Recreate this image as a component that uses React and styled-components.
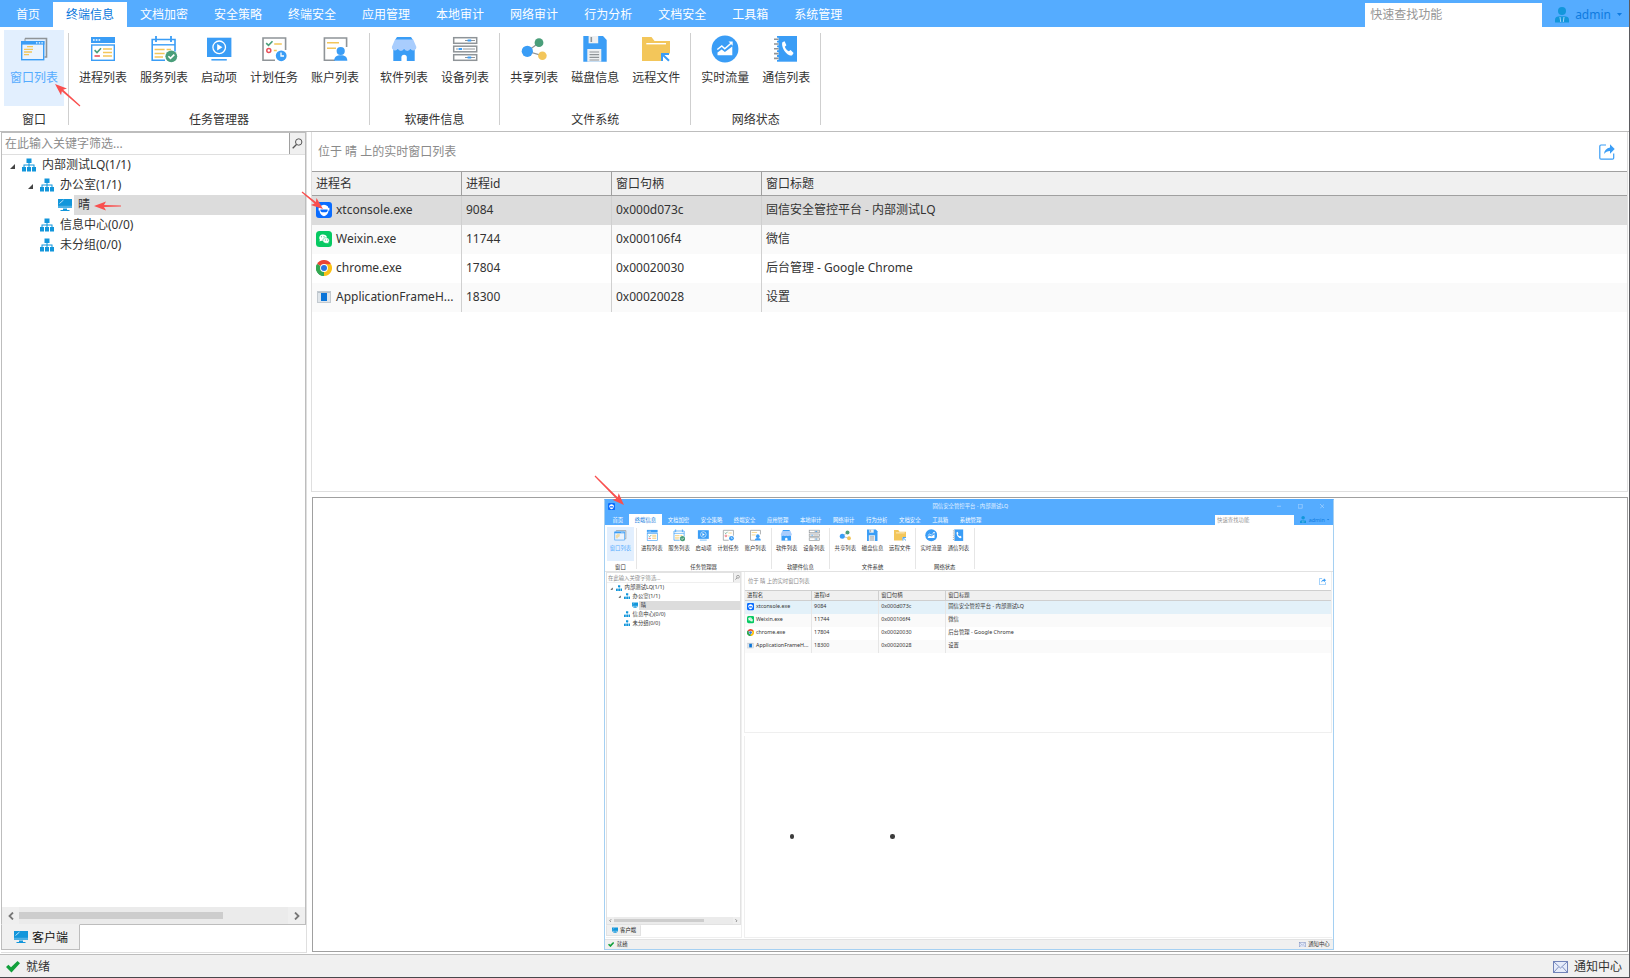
import React from "react";
import styled, { createGlobalStyle, css } from "styled-components";

const C = {
  bar: "#55acff",
  blue: "#3a9df6",
  gray: "#8f9498",
  yellow: "#f3c65a",
  green: "#4a9e7a",
  red: "#e9505a",
  tree: "#1296db",
  mark: "#f9504f",
};

const GlobalStyle = createGlobalStyle`
  * { box-sizing: border-box; }
  body { margin: 0; background: #fff; }
  body, button, input {
    font-family: "Noto Sans", "Noto Sans CJK SC", sans-serif;
    font-size: 12px;
    color: #333;
  }
  button {
    border: 0;
    padding: 0;
    background: none;
    cursor: pointer;
  }
`;

/* ---------- window frame ---------- */

const Window = styled.div`
  --line: ${(p) => (p.$preview ? "#e2e2e2" : "#bdbdbd")};
  --head-line: ${(p) => (p.$preview ? "#cfcfcf" : "#a0a0a0")};
  --cell-line: ${(p) => (p.$preview ? "#e6e6e6" : "#d0d0d0")};
  --soft-line: ${(p) => (p.$preview ? "#efefef" : "#dfdfdf")};
  --group-line: ${(p) => (p.$preview ? "#e6e6e6" : "#cfcfcf")};
  --selected: ${(p) => (p.$preview ? "#e3f1f9" : "#dcdcdc")};
  display: flex;
  flex-direction: column;
  background: #fff;
  line-height: 16px;
  ${(p) =>
    p.$preview
      ? css`
          height: 100%;
          border: 1px solid #a5d0f2;
          border-top-color: ${C.bar};
        `
      : css`
          min-height: 100vh;
          border-right: 1px solid #5a5a5e;
          border-bottom: 1px solid #48484c;
        `}
`;

const TitleBar = styled.div`
  display: grid;
  grid-template-columns: 1fr auto 1fr;
  align-items: center;
  height: 30px;
  padding-left: 6px;
  background: ${C.bar};
  color: #e6f3ff;
`;

const WindowButtons = styled.div`
  display: flex;
  justify-content: flex-end;
  button {
    width: 48px;
    height: 30px;
  }
`;

const MenuBar = styled.header`
  display: flex;
  align-items: flex-end;
  height: 27px;
  flex: none;
  padding-left: 3px;
  background: ${C.bar};
`;

const MenuTabs = styled.nav`
  display: flex;
  flex: 1;
`;

const MenuTab = styled.button`
  height: 25px;
  padding: 1px 13px 0;
  line-height: 24px;
  white-space: nowrap;
  color: ${(p) => (p.$active ? "#0a78dc" : "#fff")};
  background: ${(p) => (p.$active ? "#fff" : "transparent")};
`;

const QuickSearch = styled.input`
  width: 177px;
  height: 24px;
  padding: 0 5px 2px;
  border: 0;
  border-radius: 0;
  outline: 0;
  background: #fff;
  &::placeholder { color: #969696; opacity: 1; }
`;

const UserButton = styled.button`
  display: flex;
  align-items: center;
  height: 24px;
  margin-left: 13px;
  padding: 0 7px 1px 0;
  gap: 6px;
  color: #0f7be0;
`;

/* ---------- ribbon ---------- */

const Ribbon = styled.div`
  display: flex;
  flex: none;
  height: 105px;
  border-bottom: 1px solid var(--line);
`;

const RibbonGroup = styled.section`
  display: flex;
  flex-direction: column;
  padding: 3px 4px 0;
`;

const RibbonItems = styled.div`
  display: flex;
  gap: 1px;
`;

const GroupName = styled.div`
  height: 25px;
  line-height: 27px;
  text-align: center;
`;

const Separator = styled.div`
  margin: 6px 0;
  border-left: 1px solid var(--group-line);
`;

const RibbonButton = styled.button`
  position: relative;
  display: flex;
  flex-direction: column;
  align-items: center;
  gap: 7px;
  height: 76px;
  padding: 5px 6px 0;
  line-height: 16px;
  white-space: nowrap;
  color: ${(p) => (p.$active ? C.bar : "#333")};
  background: ${(p) => (p.$active ? "#e2effe" : "transparent")};
`;

/* ---------- work area ---------- */

const Work = styled.main`
  display: flex;
  flex: 1;
  gap: 4px;
  min-height: 0;
  padding: 0 1px 1px;
`;

const Sidebar = styled.aside`
  display: flex;
  flex-direction: column;
  flex: none;
  width: 306px;
  border-right: 1px solid var(--soft-line);
  border-bottom: 1px solid var(--soft-line);
`;

const TreePanel = styled.div`
  display: flex;
  flex-direction: column;
  flex: 1;
  border: 1px solid var(--line);
`;

const FilterRow = styled.div`
  display: flex;
  height: 22px;
  border-bottom: 1px solid var(--soft-line);
`;

const FilterInput = styled.input`
  flex: 1;
  min-width: 0;
  padding: 0 3px;
  border: 0;
  outline: 0;
  background: #fff;
  &::placeholder { color: #8c8c8c; opacity: 1; }
`;

const FilterButton = styled.button`
  display: flex;
  align-items: center;
  justify-content: center;
  width: 16px;
  border-left: 1px solid var(--head-line);
  background: #f0f0f0;
`;

const Tree = styled.ul`
  flex: 1;
  margin: 0;
  padding: 0;
  list-style: none;
`;

const TreeRow = styled.li`
  display: flex;
  align-items: center;
  height: 20px;
  padding-left: ${(p) => 5 + p.$level * 18}px;
`;

const Toggle = styled.span`
  display: flex;
  width: 15px;
  padding: 2px 0 0 2px;
`;

const NodeText = styled.span`
  position: relative;
  flex: 1;
  height: 20px;
  margin-left: 2px;
  padding-left: 4px;
  line-height: 20px;
  background: ${(p) => (p.$selected ? "#dcdcdc" : "transparent")};
`;

const ScrollBar = styled.div`
  display: flex;
  align-items: center;
  height: 17px;
  background: #ebebeb;
`;

const ScrollArrow = styled.button`
  display: flex;
  align-items: center;
  justify-content: center;
  width: 17px;
  height: 17px;
  background: #efefef;
`;

const ScrollTrack = styled.div`
  flex: 1;
`;

const ScrollThumb = styled.div`
  width: 76%;
  height: 7px;
  background: #cdcdcd;
`;

const SideTabs = styled.div`
  height: 27px;
`;

const SideTab = styled.button`
  position: relative;
  display: flex;
  align-items: center;
  gap: 4px;
  width: 79px;
  height: 26px;
  margin-top: -1px;
  padding: 0 0 1px 12px;
  border: 1px solid var(--line);
  border-top-color: #f0f0f0;
  background: #f0f0f0;
  color: #111;
`;

const Content = styled.div`
  display: flex;
  flex-direction: column;
  flex: 1;
  min-width: 0;
  gap: 5px;
`;

const ListPane = styled.section`
  flex: none;
  height: 360px;
  border: 1px solid var(--soft-line);
  border-top: 0;
`;

const ListHead = styled.div`
  display: flex;
  align-items: center;
  justify-content: space-between;
  height: 39px;
  padding: 1px 12px 0 6px;
  color: #8a8a8a;
  button { height: 16px; }
`;

const Table = styled.table`
  width: 100%;
  table-layout: fixed;
  border-collapse: separate;
  border-spacing: 0;
  text-align: left;
`;

const Col = styled.col`
  width: 150px;
`;

const HeadCell = styled.th`
  height: 25px;
  padding: 0 4px;
  font-weight: 400;
  background: #f0f0f0;
  border-top: 1px solid var(--head-line);
  border-bottom: 1px solid var(--head-line);
  &:not(:last-child) { border-right: 1px solid var(--head-line); }
`;

const Row = styled.tr`
  background: ${(p) => (p.$selected ? "var(--selected)" : p.$odd ? "#fafafa" : "#fff")};
`;

const Cell = styled.td`
  position: relative;
  height: 29px;
  padding: 0 4px 2px;
  white-space: nowrap;
  &:not(:last-child) { border-right: 1px solid var(--cell-line); }
`;

const Process = styled.span`
  display: flex;
  align-items: center;
  gap: 4px;
`;

const ScreenPane = styled.section`
  display: flex;
  align-items: center;
  justify-content: center;
  flex: 1;
  margin: 0 0 1px 1px;
  padding-right: 2px;
  border: 1px solid var(--head-line);
`;

const EmptyPane = styled.section`
  position: relative;
  flex: 1;
  border-left: 1px solid var(--soft-line);
  border-bottom: 1px solid var(--soft-line);
`;

const Dot = styled.span`
  position: absolute;
  left: ${(p) => p.$x}px;
  top: 221px;
  width: 10px;
  height: 10px;
  border-radius: 50%;
  background: #3c3c3c;
`;

const ScreenFrame = styled.div`
  position: relative;
`;

/* The remote desktop keeps its own resolution and is shown reduced. */
const RemoteScreen = styled.div`
  width: 1632px;
  height: 1009px;
  zoom: 0.447;
`;

const StatusBar = styled.footer`
  display: flex;
  align-items: center;
  justify-content: space-between;
  flex: none;
  height: 23px;
  padding: 2px 7px 0 6px;
  border-top: 1px solid var(--line);
  background: #f0f0f0;
`;

const StatusItem = styled.span`
  display: flex;
  align-items: center;
  gap: 6px;
`;

const ArrowSvg = styled.svg`
  position: absolute;
  left: ${(p) => p.$left}px;
  top: ${(p) => p.$top}px;
  z-index: 2;
  overflow: visible;
  pointer-events: none;
`;

/* Red pointer: the tip sits at (left, top), the tail is dx, dy away. */
function Arrow({ left, top, dx, dy }) {
  const len = Math.hypot(dx, dy);
  const angle = (Math.atan2(dy, dx) * 180) / Math.PI;
  return (
    <ArrowSvg $left={left} $top={top} width="1" height="1" aria-hidden="true">
      <g transform={`rotate(${angle})`} fill={C.mark}>
        <path d={`M0 0 L12 -4.5 L10 -1 L${len} -0.6 L${len} 0.6 L10 1 L12 4.5 Z`} />
      </g>
    </ArrowSvg>
  );
}

/* ---------- icons ---------- */

const Glyph = ({ children }) => (
  <svg width="28" height="28" viewBox="0 0 28 28" fill="none" aria-hidden="true">
    {children}
  </svg>
);

const icons = {
  windows: (
    <Glyph>
      <path d="M5 3.5H26.5V22H24.5" stroke={C.gray} strokeWidth="1.6" />
      <path d="M5 3.5V6" stroke={C.gray} strokeWidth="1" />
      <rect x="1.7" y="6.7" width="22" height="18" stroke={C.blue} strokeWidth="1.4" fill="#eaf3fe" />
      <path d="M1 6h23.4v3.6H1z" fill={C.blue} />
      <path d="M16 7.8h1.4M18.8 7.8h1.4M21.4 7.8h1.4" stroke="#fff" strokeWidth="1.2" />
      <path d="M7 11.7h6M4 14.3h9M4 17h8M4 19.6h5" stroke={C.yellow} strokeWidth="1.3" />
    </Glyph>
  ),
  process: (
    <Glyph>
      <path d="M2 2h24v6H2z" fill={C.blue} />
      <path d="M4 5h1.6M6.8 5h1.6M9.6 5h1.6" stroke="#fff" strokeWidth="1.4" />
      <rect x="2.7" y="10" width="22.6" height="15.3" stroke={C.blue} strokeWidth="1.4" />
      <path d="M5.6 15.2l2.4 2.3 4-4.2" stroke={C.green} strokeWidth="1.6" />
      <path d="M5.5 21h5.4" stroke={C.red} strokeWidth="1.6" />
      <path d="M14 14h9M14 17.5h9M14 21h9" stroke={C.yellow} strokeWidth="1.6" />
    </Glyph>
  ),
  service: (
    <Glyph>
      <path d="M15 25.2H2.2V4.5H25v12" stroke={C.blue} strokeWidth="1.6" />
      <path d="M2 9.8h23" stroke={C.blue} strokeWidth="1.4" />
      <path d="M6 1v6M21 1v6" stroke={C.blue} strokeWidth="1.8" />
      <path d="M4.6 14.5H21M4.6 18.5H15M4.6 22H13" stroke={C.yellow} strokeWidth="1.5" strokeDasharray="10 2" />
      <circle cx="21.3" cy="21.3" r="5.9" fill={C.green} />
      <path d="M18.4 21.3l2.1 2.1 3.8-3.8" stroke="#fff" strokeWidth="1.6" />
    </Glyph>
  ),
  startup: (
    <Glyph>
      <path d="M2 2.7h24.4V22H2z" fill={C.blue} />
      <circle cx="14.2" cy="12.3" r="6.3" stroke="#fff" strokeWidth="1.3" />
      <path d="M12.2 9v6.6l5.2-3.3z" fill="#fff" />
      <path d="M6.4 24.8h15.4" stroke={C.blue} strokeWidth="1.5" />
    </Glyph>
  ),
  schedule: (
    <Glyph>
      <path d="M15 25.2H3V3h22.6v12" stroke={C.gray} strokeWidth="1.6" />
      <path d="M6.2 8.2l2.3 2.2 4-4.2" stroke={C.green} strokeWidth="1.6" />
      <path d="M14.2 9h7.6M13.8 15.5h3" stroke={C.yellow} strokeWidth="1.5" />
      <circle cx="8.8" cy="15.4" r="2" stroke={C.red} strokeWidth="1.5" />
      <circle cx="21.2" cy="20.8" r="5.4" fill={C.blue} />
      <path d="M21 17.6v3.4h3" stroke="#fff" strokeWidth="1.3" />
    </Glyph>
  ),
  account: (
    <Glyph>
      <path d="M14 25.2H3.4V3h22.2v9" stroke={C.gray} strokeWidth="1.6" />
      <path d="M6 7.7h12M6 13.3h9" stroke={C.yellow} strokeWidth="1.5" />
      <circle cx="19.7" cy="16" r="4.1" fill={C.blue} />
      <path d="M13.2 25.8c0-4 2.4-5.6 6.5-5.6s6.6 1.6 6.6 5.6z" fill={C.blue} />
    </Glyph>
  ),
  software: (
    <Glyph>
      <path d="M3.3 14h21.4v12H3.3z" fill={C.blue} />
      <path d="M11.4 26v-3.6a2.7 2.7 0 0 1 5.4 0V26z" fill="#fff" />
      <path d="M7 2h14l2 3H5z" fill={C.blue} />
      <path d="M5 4.500h18.200L26.400 12a3.200 3.200 0 0 1-6 1.800 3.400 3.400 0 0 1-6.300 0 3.400 3.400 0 0 1-6.300 0A3.200 3.200 0 0 1 1.800 12z" fill="#a9cdfd" />
    </Glyph>
  ),
  device: (
    <Glyph>
      <g stroke={C.gray} strokeWidth="1.5">
        <rect x="2.7" y="2.7" width="23" height="5.6" />
        <rect x="2.7" y="11.2" width="23" height="5.6" />
        <rect x="2.7" y="19.7" width="23" height="5.6" />
        <path d="M14 5.5h10M5 14h2M12 14h12M14 22.5h10" strokeWidth="1" />
      </g>
      <path d="M16.6 5.5h3.6M7.5 14h3.6M16.6 22.5h3.6" stroke={C.blue} strokeWidth="1.8" />
    </Glyph>
  ),
  share: (
    <Glyph>
      <path d="M19 7.7L7.3 16.3l15 4.4" stroke={C.gray} strokeWidth="1.2" />
      <circle cx="7.3" cy="16.3" r="5.6" fill={C.blue} />
      <circle cx="19" cy="7.7" r="4.4" fill={C.green} />
      <circle cx="22.4" cy="20.7" r="4.3" fill={C.yellow} />
    </Glyph>
  ),
  disk: (
    <Glyph>
      <path d="M2.3 1H22l3.7 4v21.7H2.3z" fill={C.blue} />
      <path d="M7.6 1H17.2v7.3H7.6z" fill="#eef0f2" />
      <path d="M10.3 2v5" stroke={C.gray} strokeWidth="1.6" />
      <path d="M6.3 14h14v12.7h-14z" fill="#eef0f2" />
      <path d="M8.5 17h9.6M8.5 19.7h9.6M8.5 22.3h9.6M8.5 25h9.6" stroke={C.gray} strokeWidth="1.2" />
    </Glyph>
  ),
  folder: (
    <Glyph>
      <path d="M0 2h9.5l3 4H28v12.5H19V26H0z" fill={C.yellow} />
      <path d="M4.3 8.7H24" stroke="#fff" strokeWidth="1.4" />
      <path d="M20 26v-7h7M20.2 19.2l6.8 6.6" stroke={C.blue} strokeWidth="2" />
    </Glyph>
  ),
  traffic: (
    <Glyph>
      <circle cx="14" cy="14" r="13.4" fill={C.blue} />
      <path d="M6.3 14.5l4.5-3.5 3 2.8 6.8-6" stroke="#fff" strokeWidth="1.5" />
      <path d="M17.5 6.6h4.2v4.2z" fill="#fff" />
      <path d="M6.5 20.2v-2.6l4.2-3.2 3.2 2.5 7.4-5.4v8.7z" fill="#fff" />
    </Glyph>
  ),
  contacts: (
    <Glyph>
      <path d="M5 1h20v25.7H5z" fill={C.blue} />
      <path d="M2 4.2h4.5M2 9h4.5M2 13.8h4.5M2 18.6h4.5M2 23.4h4.5" stroke="#fff" strokeWidth="3" />
      <path d="M2 4.2h4.5M2 9h4.5M2 13.8h4.5M2 18.6h4.5M2 23.4h4.5" stroke={C.gray} strokeWidth="1.6" />
      <path d="M10.4 7.2l2.2-1 1.8 4-1.6 1.5c.8 2 2.2 3.6 4 4.6l1.8-1.2 3 3-1.4 2.2c-1 .8-3.6 0-6-2.4-3-3-4.9-8-3.800-10.700z" fill="#fff" />
    </Glyph>
  ),
};

const GroupIcon = () => (
  <svg width="14" height="14" viewBox="0 0 14 14" fill={C.tree} aria-hidden="true">
    <path d="M4.5 0.5h5v4.5h-5zM0 9h4v4.500H0zM5 9h4v4.500H5zM10 9h4v4.500h-4zM6.500 5h1v1.500h-1zM1.500 6.500h11v2.500h-1v-1.500h-4v1.500h-1v-1.500h-4v1.500h-1z" />
  </svg>
);

const MonitorIcon = () => (
  <svg width="14" height="14" viewBox="0 0 14 14" aria-hidden="true">
    <path d="M0 1h14v8.8H0zM5 10.5h4v1.5h2.5v1h-9v-1H5z" fill={C.tree} />
    <path d="M0 8.3h14" stroke="#7cc6ee" strokeWidth="0.7" />
    <path d="M1.5 5.5l4-3.500" stroke="#bfe3f7" strokeWidth="1" />
  </svg>
);

const UserIcon = () => (
  <svg width="14" height="16" viewBox="0 0 14 16" fill={C.tree} aria-hidden="true">
    <circle cx="7" cy="4" r="4" />
    <path d="M0 15.5v-3c0-2 2-3.2 5-3.2h4c3 0 5 1.2 5 3.2v3z" />
    <path d="M5 10l.7 5M9 10l-.7 5" stroke="#9fd3f8" strokeWidth="1" />
  </svg>
);

const ExportIcon = () => (
  <svg width="16" height="16" viewBox="0 0 16 16" fill="none" aria-hidden="true">
    <path d="M7 1H2Q.8 1 .8 2.2V14q0 1.2 1.2 1.2h11.5q1.2 0 1.2-1.2V9.5" stroke={C.blue} strokeWidth="1.2" />
    <path d="M11 .3L15.7 5 11 9.7V7C8.500 7 6.500 8 5 10c.3-3.500 2.500-6 6-6.500z" fill={C.blue} />
  </svg>
);

const SearchIcon = () => (
  <svg width="11" height="11" viewBox="0 0 11 11" fill="none" stroke="#555" aria-hidden="true">
    <circle cx="6.7" cy="4" r="3.2" />
    <path d="M4.5 6.5L.7 10.3" strokeWidth="1.3" />
  </svg>
);

const CheckIcon = () => (
  <svg width="14" height="12" viewBox="0 0 14 12" aria-hidden="true">
    <path d="M0 6l2.4-2.3L5 6.3 11.5 0 14 2.3 5.5 11.5z" fill="#12a03c" />
  </svg>
);

const MailIcon = () => (
  <svg width="15" height="12" viewBox="0 0 15 12" fill="none" stroke="#7183b8" aria-hidden="true">
    <rect x="0.5" y="0.5" width="14" height="11" fill="#e6ecfa" />
    <path d="M1 1l6.5 6L14 1M1 11l4.5-5M14 11L9.500 6" strokeWidth="0.9" />
  </svg>
);

const ConsoleIcon = () => (
  <svg width="16" height="16" viewBox="0 0 16 16" aria-hidden="true">
    <rect width="16" height="16" rx="3" fill="#0a6cff" />
    <path d="M4 4.600Q8 .8 12 4.600v1.200H4zM2.600 5.800h10.800v2.600h-.9c0 3-2 5-4.500 5.800-2.500-.8-4.500-2.800-4.500-5.800h-.9z" fill="#fff" />
    <path d="M4.400 7.400h7.200v1.400q-.3 1.400-1.600 1.400H6q-1.300 0-1.600-1.400z" fill="#0a6cff" />
  </svg>
);

const WeixinIcon = () => (
  <svg width="16" height="16" viewBox="0 0 16 16" aria-hidden="true">
    <rect width="16" height="16" rx="3.5" fill="#07c962" />
    <path d="M3.500 10.500l.3-2A3.900 3.300 0 1 1 6.500 10l-1.300-.3z" fill="#fff" />
    <path d="M12.700 12.600l-.1-1.300a3.300 2.800 0 1 0-2.300 1h1z" fill="#fff" stroke="#07c962" strokeWidth="0.5" />
    <g fill="#07a852">
      <circle cx="5.4" cy="5.8" r=".5" />
      <circle cx="8" cy="5.8" r=".5" />
      <circle cx="9.3" cy="9" r=".5" />
      <circle cx="11.4" cy="9" r=".5" />
    </g>
  </svg>
);

const ChromeIcon = () => (
  <svg width="16" height="16" viewBox="0 0 16 16" aria-hidden="true">
    <path d="M8 8L1.070 4A8 8 0 0 1 14.930 4z" fill="#ea4335" />
    <path d="M8 8L14.930 4A8 8 0 0 1 8 16z" fill="#fbc116" />
    <path d="M8 8L8 16A8 8 0 0 1 1.070 4z" fill="#34a853" />
    <path d="M8 4.200h6.800L15 4.200 11.500 9.800 8 16 9 11z" fill="#fbc116" />
    <path d="M1.070 4L4.600 10 8 11.500V16A8 8 0 0 1 1.070 4z" fill="#34a853" />
    <circle cx="8" cy="8" r="3.9" fill="#fff" />
    <circle cx="8" cy="8" r="3" fill="#2b74e4" />
  </svg>
);

const FrameHostIcon = () => (
  <svg width="16" height="16" viewBox="0 0 16 16" aria-hidden="true">
    <rect x="1.5" y="2.5" width="13" height="11" fill="#dfe5ea" stroke="#c3cad0" />
    <path d="M2 3h12v1H2z" fill="#b8c1c9" />
    <rect x="5" y="4" width="6" height="8" fill="#0a74d8" />
  </svg>
);

/* ---------- data ---------- */

const menu = ["首页", "终端信息", "文档加密", "安全策略", "终端安全", "应用管理", "本地审计", "网络审计", "行为分析", "文档安全", "工具箱", "系统管理"];

const ribbon = [
  { name: "窗口", items: [["窗口列表", "windows"]] },
  {
    name: "任务管理器",
    items: [["进程列表", "process"], ["服务列表", "service"], ["启动项", "startup"], ["计划任务", "schedule"], ["账户列表", "account"]],
  },
  { name: "软硬件信息", items: [["软件列表", "software"], ["设备列表", "device"]] },
  { name: "文件系统", items: [["共享列表", "share"], ["磁盘信息", "disk"], ["远程文件", "folder"]] },
  { name: "网络状态", items: [["实时流量", "traffic"], ["通信列表", "contacts"]] },
];

const nodes = [
  { text: "内部测试LQ(1/1)", level: 0, open: true },
  { text: "办公室(1/1)", level: 1, open: true },
  { text: "晴", level: 2, selected: true },
  { text: "信息中心(0/0)", level: 1 },
  { text: "未分组(0/0)", level: 1 },
];

const columns = ["进程名", "进程id", "窗口句柄", "窗口标题"];

const processes = [
  { icon: <ConsoleIcon />, name: "xtconsole.exe", id: "9084", handle: "0x000d073c", title: "固信安全管控平台 - 内部测试LQ" },
  { icon: <WeixinIcon />, name: "Weixin.exe", id: "11744", handle: "0x000106f4", title: "微信" },
  { icon: <ChromeIcon />, name: "chrome.exe", id: "17804", handle: "0x00020030", title: "后台管理 - Google Chrome" },
  { icon: <FrameHostIcon />, name: "ApplicationFrameH...", id: "18300", handle: "0x00020028", title: "设置" },
];

/* ---------- console ---------- */

function RemoteTitleBar() {
  return (
    <TitleBar>
      <ConsoleIcon />
      <span>固信安全管控平台 - 内部测试LQ</span>
      <WindowButtons>
        {[["最小化", "M0 5h10"], ["最大化", "M.5 .5h9v9h-9z"], ["关闭", "M0 0l10 10M10 0L0 10"]].map(([label, d]) => (
          <button key={label} aria-label={label}>
            <svg width="10" height="10" viewBox="0 0 10 10" fill="none" stroke="#d6ebff">
              <path d={d} />
            </svg>
          </button>
        ))}
      </WindowButtons>
    </TitleBar>
  );
}

function Console({ preview = false }) {
  return (
    <Window $preview={preview}>
      {preview && <RemoteTitleBar />}
      <MenuBar>
        <MenuTabs>
          {menu.map((m, i) => (
            <MenuTab key={m} $active={i === 1}>{m}</MenuTab>
          ))}
        </MenuTabs>
        <QuickSearch aria-label="快速查找功能" placeholder="快速查找功能" />
        <UserButton>
          <UserIcon />
          <span>admin</span>
          <svg width="5" height="3" viewBox="0 0 5 3" fill="#0f7be0" aria-hidden="true"><path d="M0 0h5L2.5 3z" /></svg>
        </UserButton>
      </MenuBar>

      <Ribbon>
        {ribbon.map((g, gi) => (
          <React.Fragment key={g.name}>
            <RibbonGroup>
              <RibbonItems>
                {g.items.map(([label, icon]) => (
                  <RibbonButton key={label} $active={gi === 0}>
                    {icons[icon]}
                    <span>{label}</span>
                    {gi === 0 && !preview && <Arrow left={51} top={54} dx={25} dy={22} />}
                  </RibbonButton>
                ))}
              </RibbonItems>
              <GroupName>{g.name}</GroupName>
            </RibbonGroup>
            <Separator />
          </React.Fragment>
        ))}
      </Ribbon>

      <Work>
        <Sidebar>
          <TreePanel>
            <FilterRow>
              <FilterInput aria-label="关键字筛选" placeholder="在此输入关键字筛选..." />
              <FilterButton aria-label="搜索"><SearchIcon /></FilterButton>
            </FilterRow>
            <Tree>
              {nodes.map((n) => (
                <TreeRow key={n.text} $level={n.level}>
                  <Toggle>
                    {n.open && (
                      <svg width="7" height="7" viewBox="0 0 7 7" fill="#444" aria-hidden="true"><path d="M6 1v5H1z" /></svg>
                    )}
                  </Toggle>
                  {n.selected ? <MonitorIcon /> : <GroupIcon />}
                  <NodeText $selected={n.selected}>
                    {n.text}
                    {n.selected && !preview && <Arrow left={20} top={11} dx={27} dy={0} />}
                  </NodeText>
                </TreeRow>
              ))}
            </Tree>
            <ScrollBar>
              <ScrollArrow aria-label="向左滚动">
                <svg width="6" height="8" viewBox="0 0 6 8" fill="none" stroke="#777" strokeWidth="1.8"><path d="M5 .5L1.5 4 5 7.5" /></svg>
              </ScrollArrow>
              <ScrollTrack><ScrollThumb /></ScrollTrack>
              <ScrollArrow aria-label="向右滚动">
                <svg width="6" height="8" viewBox="0 0 6 8" fill="none" stroke="#777" strokeWidth="1.8"><path d="M1 .5L4.5 4 1 7.5" /></svg>
              </ScrollArrow>
            </ScrollBar>
          </TreePanel>
          <SideTabs>
            <SideTab><MonitorIcon />客户端</SideTab>
          </SideTabs>
        </Sidebar>

        <Content>
          <ListPane>
            <ListHead>
              <span>位于 晴 上的实时窗口列表</span>
              <button aria-label="导出"><ExportIcon /></button>
            </ListHead>
            <Table>
              <colgroup><Col /><Col /><Col /><col /></colgroup>
              <thead>
                <tr>{columns.map((c) => <HeadCell key={c}>{c}</HeadCell>)}</tr>
              </thead>
              <tbody>
                {processes.map((p, i) => (
                  <Row key={p.id} $selected={i === 0} $odd={i % 2 === 1}>
                    <Cell>
                      <Process>{p.icon}{p.name}</Process>
                      {i === 0 && !preview && <Arrow left={11} top={13} dx={-21} dy={-17} />}
                    </Cell>
                    <Cell>{p.id}</Cell>
                    <Cell>{p.handle}</Cell>
                    <Cell>{p.title}</Cell>
                  </Row>
                ))}
              </tbody>
            </Table>
          </ListPane>
          {preview ? (
            <EmptyPane>
              <Dot $x={100} />
              <Dot $x={324} />
            </EmptyPane>
          ) : (
            <ScreenPane aria-label="远程屏幕">
              <ScreenFrame>
                <RemoteScreen inert><Console preview /></RemoteScreen>
                <Arrow left={20} top={6} dx={-29} dy={-29} />
              </ScreenFrame>
            </ScreenPane>
          )}
        </Content>
      </Work>

      <StatusBar>
        <StatusItem><CheckIcon />就绪</StatusItem>
        <StatusItem><MailIcon />通知中心</StatusItem>
      </StatusBar>
    </Window>
  );
}

export default function App() {
  return (
    <>
      <GlobalStyle />
      <Console />
    </>
  );
}
